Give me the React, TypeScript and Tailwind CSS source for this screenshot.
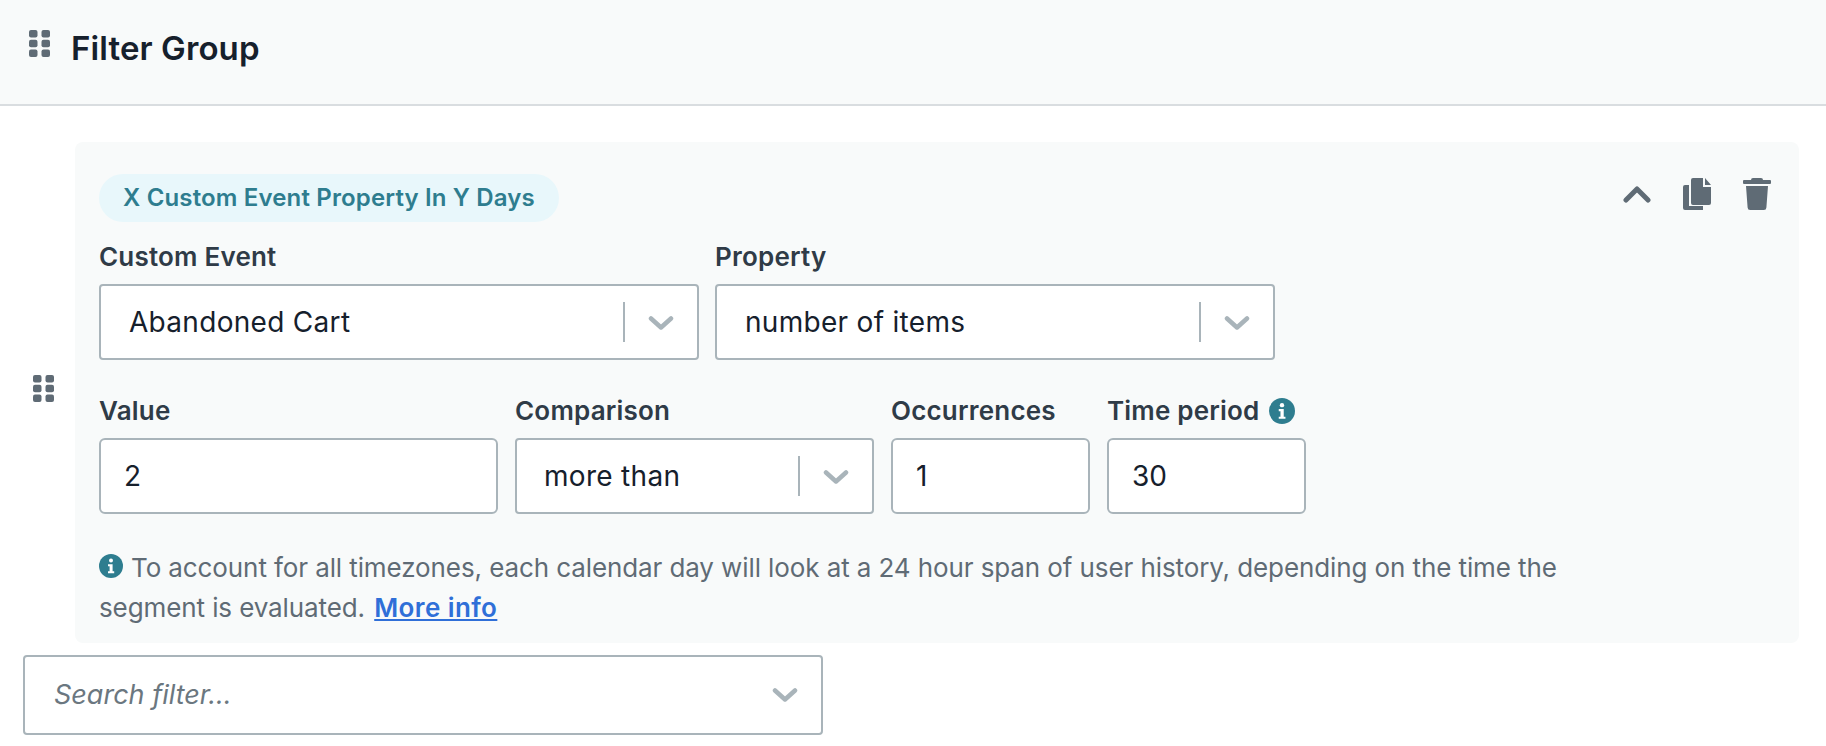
import React from "react";

function Grip() {
  return (
    <svg width="21" height="27" viewBox="0 0 21 27" className="block shrink-0" fill="#5f6b75">
      <rect x="0" y="0" width="8.500" height="7.500" rx="2" />
      <rect x="12.500" y="0" width="8.500" height="7.500" rx="2" />
      <rect x="0" y="9.750" width="8.500" height="7.500" rx="2" />
      <rect x="12.500" y="9.750" width="8.500" height="7.500" rx="2" />
      <rect x="0" y="19.500" width="8.500" height="7.500" rx="2" />
      <rect x="12.500" y="19.500" width="8.500" height="7.500" rx="2" />
    </svg>
  );
}

function Chevron() {
  return (
    <svg width="26" height="16" viewBox="0 0 26 16" className="block shrink-0" fill="none" stroke="#a9b4ba" strokeWidth="4.500" strokeLinecap="round" strokeLinejoin="round">
      <path d="M3 3.500 L13 12.500 L23 3.500" />
    </svg>
  );
}

function Info({ size }: { size: number }) {
  return (
    <svg width={size} height={size} viewBox="0 0 24 24" className="block shrink-0">
      <circle cx="12" cy="12" r="12" fill="#2e7d8f" />
      <circle cx="12" cy="6.600" r="2" fill="#fff" />
      <path d="M9 10.200h4.600v7h1.600v2H9v-2h1.600v-5H9z" fill="#fff" />
    </svg>
  );
}

function Select({ value, className, pad }: { value: string; className: string; pad: string }) {
  return (
    <div className={`flex h-[76px] items-center rounded-[4px] border-2 border-[#a9b4ba] bg-white ${className}`}>
      <span className={`flex-1 text-[28px] tracking-[0.3px] text-[#16202c] ${pad}`}>{value}</span>
      <span className="h-[40px] w-[2px] bg-[#a9b4ba]" />
      <span className="flex w-[72px] justify-center pt-[1px]">
        <Chevron />
      </span>
    </div>
  );
}

function TextBox({ value, className }: { value: string; className: string }) {
  return (
    <div className={`flex h-[76px] items-center rounded-[6px] border-2 border-[#a9b4ba] bg-white pl-[23px] text-[28px] text-[#16202c] ${className}`}>
      {value}
    </div>
  );
}

function Label({ children }: { children: React.ReactNode }) {
  return <div className="mb-[12px] flex h-[30px] items-center text-[26px] leading-[30px] font-semibold tracking-[0.2px] text-[#2f3b47]">{children}</div>;
}

export default function App() {
  return (
    <div className="h-[746px] w-[1826px] overflow-hidden bg-white font-['Inter',sans-serif]">
      <header className="flex h-[106px] items-start border-b-2 border-[#d9dde0] bg-[#f8fafa] pt-[30px] pl-[29px]">
        <Grip />
        <h1 className="mt-[-2px] ml-[21px] text-[33px] leading-[40px] font-semibold tracking-[0.1px] text-[#16202c]">Filter Group</h1>
      </header>

      <div className="flex items-center pt-[36px] pr-[27px] pl-[33px]">
        <div className="mr-[21px] pb-[9px]">
          <Grip />
        </div>
        <section className="flex-1 rounded-[8px] bg-[#f8fafa] pt-[32px] pr-[28px] pb-[15px] pl-[24px]">
          <div className="flex items-start justify-between">
            <div className="flex h-[48px] w-[460px] items-center justify-center rounded-full bg-[#e8f7fb] text-[24px] font-semibold tracking-[0.15px] text-[#2e7d8f]">
              X Custom Event Property In Y Days
            </div>
            <div className="mt-[4px] flex items-center gap-[32px]">
              <svg width="28" height="18" viewBox="0 0 28 18" fill="none" stroke="#5f6b75" strokeWidth="5" strokeLinecap="round" strokeLinejoin="round">
                <path d="M3 15 L14 4 L25 15" />
              </svg>
              <svg width="28" height="32" viewBox="0 0 28 32" fill="#5f6b75">
                <path d="M6 7v21h14v4H2a2 2 0 0 1-2-2V9a2 2 0 0 1 2-2z" />
                <path d="M10 0h10v9h8v16a2 2 0 0 1-2 2H10a2 2 0 0 1-2-2V2a2 2 0 0 1 2-2z" />
                <path d="M22 0l6 7h-6z" />
              </svg>
              <svg width="28" height="32" viewBox="0 0 28 32" fill="#5f6b75">
                <path d="M10 0h8a2 2 0 0 1 2 2h7a1 1 0 0 1 1 1v2a1 1 0 0 1-1 1H1a1 1 0 0 1-1-1V3a1 1 0 0 1 1-1h7a2 2 0 0 1 2-2z" />
                <path d="M3 8h22l-1.600 21.500a2.600 2.600 0 0 1-2.600 2.500H7.200a2.600 2.600 0 0 1-2.600-2.500z" />
              </svg>
            </div>
          </div>

          <div className="mt-[20px] flex gap-[16px]">
            <div>
              <Label>Custom Event</Label>
              <Select value="Abandoned Cart" className="w-[600px]" pad="pl-[28px]" />
            </div>
            <div>
              <Label>Property</Label>
              <Select value="number of items" className="w-[560px]" pad="pl-[28px]" />
            </div>
          </div>

          <div className="mt-[36px] flex gap-[17px]">
            <div>
              <Label>Value</Label>
              <TextBox value="2" className="w-[399px]" />
            </div>
            <div>
              <Label>Comparison</Label>
              <Select value="more than" className="w-[359px]" pad="pl-[27px]" />
            </div>
            <div>
              <Label>Occurrences</Label>
              <TextBox value="1" className="w-[199px]" />
            </div>
            <div>
              <Label>
                Time period
                <span className="ml-[9px]">
                  <Info size={26} />
                </span>
              </Label>
              <TextBox value="30" className="w-[199px]" />
            </div>
          </div>

          <p className="mt-[34px] w-[1480px] text-[26px] leading-[40px] tracking-[-0.1px] text-[#5f6b75]">
            <span className="mr-[8px] inline-block align-[-1px]">
              <Info size={24} />
            </span>
            To account for all timezones, each calendar day will look at a 24 hour span of user history, depending on the time the segment is evaluated.{" "}
            <a className="ml-[2px] font-semibold tracking-[0.4px] text-[#2f6fd8] underline">More info</a>
          </p>
        </section>
      </div>

      <div className="mt-[12px] ml-[23px] flex h-[80px] w-[800px] items-center justify-between rounded-[4px] border-2 border-[#a9b4ba] bg-white pr-[23px] pl-[29px]">
        <span className="text-[27px] text-[#6b7780] italic">Search filter...</span>
        <Chevron />
      </div>
    </div>
  );
}
